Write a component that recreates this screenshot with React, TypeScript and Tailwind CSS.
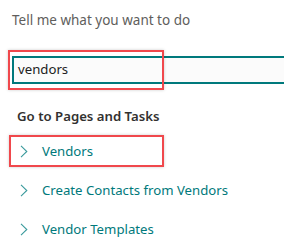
import React from 'react';

const items = ['Vendors', 'Create Contacts from Vendors', 'Vendor Templates'];

const Chevron: React.FC = () => (
  <svg width="8" height="13" viewBox="0 0 8 13" className="shrink-0">
    <path d="M1 0.8 L6.8 6.5 L1 12.2" fill="none" stroke="#3a9a9c" strokeWidth="1.1" />
  </svg>
);

const App: React.FC = () => {
  return (
    <div
      className="relative w-[284px] h-[249px] overflow-hidden bg-white"
      style={{ fontFamily: '"Noto Sans", "Open Sans", sans-serif' }}
    >
      {/* Search */}
      <div className="pl-[12px] pt-[10px] text-[13.5px] leading-[20px] text-[#605e5c]">
        Tell me what you want to do
      </div>
      <div className="ml-[12px] mt-[26px] w-[300px] h-[28px] border-2 border-[#00797c] bg-[#fbfbfb] flex items-center pl-[4px] text-[13.2px] text-[#212121]">
        vendors
      </div>

      {/* Results */}
      <div className="pl-[17px] mt-[22px] text-[13.2px] leading-[20px] font-semibold text-[#323130]">
        Go to Pages and Tasks
      </div>
      <div className="mt-[6px] flex flex-col">
        {items.map((label) => (
          <div key={label} className="h-[39px] flex items-center pl-[20px] gap-[14px] text-[13.2px] text-[#00797b]">
            <Chevron />
            <span>{label}</span>
          </div>
        ))}
      </div>

      {/* Highlight annotations */}
      <div className="absolute left-[8px] top-[50px] w-[156px] h-[40px] border-2 border-[#f0484c] shadow-[0_0_3px_rgba(0,0,0,0.2)]" />
      <div className="absolute left-[9px] top-[135px] w-[155px] h-[32px] border-2 border-[#f0484c] shadow-[0_0_3px_rgba(0,0,0,0.2)]" />
    </div>
  );
};

export default App;
